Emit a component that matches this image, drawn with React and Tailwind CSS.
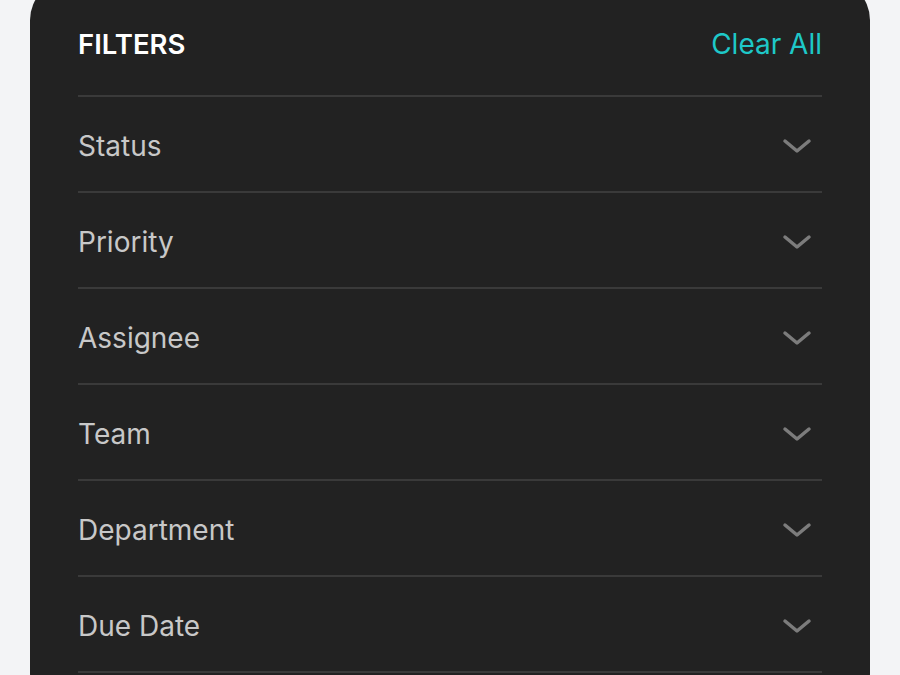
export default function App() {
  const rows = ["Status", "Priority", "Assignee", "Team", "Department", "Due Date"];
  return (
    <div className="h-[675px] overflow-hidden bg-[#f3f4f6] px-[30px] font-['Inter','Liberation_Sans',sans-serif]">
      <div className="-mt-5 rounded-[40px] bg-[#222222] px-12 pt-12 pb-10">
        <div className="flex items-center justify-between pb-[35px]">
          <h2 className="text-[27.5px] font-semibold leading-8 text-white">FILTERS</h2>
          <button className="text-[28px] leading-8 text-[#1ec8c8]">Clear All</button>
        </div>
        {rows.map((r, i) => (
          <div
            key={r}
            className={`flex items-center justify-between border-t-2 border-[#3a3a3a] pt-[3px] ${i === rows.length - 1 ? "h-[98px] border-b-2" : "h-24"}`}
          >
            <span className="text-[28px] leading-8 text-[#c8c8c8]">{r}</span>
            <svg width="30" height="16" viewBox="0 0 30 16" className="mr-2.5">
              <polyline points="3,3 15,13 27,3" fill="none" stroke="#7c7c7c" strokeWidth="3.5" strokeLinecap="round" strokeLinejoin="round" />
            </svg>
          </div>
        ))}
      </div>
    </div>
  );
}
